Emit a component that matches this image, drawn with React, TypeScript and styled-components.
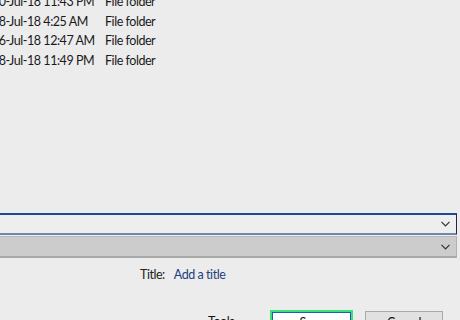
import styled, { createGlobalStyle } from "styled-components";

const GlobalStyle = createGlobalStyle`
  html, body {
    margin: 0;
    padding: 0;
    background: #ececec;
  }
  body {
    font-family: Lato, "Noto Sans", "Liberation Sans", sans-serif;
    font-size: 12.5px;
    letter-spacing: -0.45px;
    color: #1a1a1a;
  }
`;

const rows = [
  { date: "20-Jul-18 11:43 PM", type: "File folder" },
  { date: "18-Jul-18 4:25 AM", type: "File folder" },
  { date: "16-Jul-18 12:47 AM", type: "File folder" },
  { date: "18-Jul-18 11:49 PM", type: "File folder" },
];

function Chevron() {
  return (
    <svg width="9" height="6" viewBox="0 0 9 6">
      <path d="M0.5 0.8 L4.5 4.8 L8.5 0.8" fill="none" stroke="#333" strokeWidth="1.2" />
    </svg>
  );
}

function App() {
  return (
    <Window>
      <GlobalStyle />
      <FileList>
        {rows.map((r) => (
          <FileRow key={r.date}>
            <DateCell>{r.date}</DateCell>
            <TypeCell>{r.type}</TypeCell>
          </FileRow>
        ))}
      </FileList>
      <Form>
        <Combo $active>
          <Chevron />
        </Combo>
        <Combo>
          <Chevron />
        </Combo>
        <MetaRow>
          <MetaLabel>Title:</MetaLabel>
          <MetaLink>Add a title</MetaLink>
        </MetaRow>
        <Footer>
          <Tools>
            Tools <Caret>▾</Caret>
          </Tools>
          <SaveButton>Save</SaveButton>
          <Button>Cancel</Button>
        </Footer>
      </Form>
    </Window>
  );
}

const Window = styled.div`
  width: 460px;
  height: 320px;
  overflow: hidden;
  display: flex;
  flex-direction: column;
  background: #ececec;
`;

const FileList = styled.div`
  flex-shrink: 0;
  height: 221px;
  margin-top: -8px;
  display: flex;
  flex-direction: column;
`;

const FileRow = styled.div`
  height: 19.5px;
  display: flex;
  align-items: center;
  white-space: nowrap;
`;

const DateCell = styled.div`
  width: 113px;
  margin-left: -8px;
`;

const TypeCell = styled.div``;

const Form = styled.div`
  flex-shrink: 0;
  display: flex;
  flex-direction: column;
`;

const Combo = styled.div<{ $active?: boolean }>`
  box-sizing: border-box;
  flex-shrink: 0;
  width: 467px;
  margin-left: -10px;
  height: 22px;
  margin-bottom: ${(p) => (p.$active ? "1px" : "0")};
  display: flex;
  align-items: center;
  justify-content: flex-end;
  padding-right: 6px;
  background: ${(p) => (p.$active ? "#eeeeee" : "#cccccc")};
  border: 1px solid ${(p) => (p.$active ? "#1d4a94" : "#b8b8b8")};
  border-top: ${(p) => (p.$active ? "2px solid #1d4a94" : "1px solid #bcbcbc")};
  border-bottom: ${(p) => (p.$active ? "2px solid #6f86ad" : "2px solid #a8a8a8")};
  border-right-color: ${(p) => (p.$active ? "#1d2a44" : "#b0b0b0")};
`;

const MetaRow = styled.div`
  display: flex;
  align-items: center;
  gap: 9px;
  padding-left: 140px;
  height: 30px;
  margin-top: 1px;
`;

const MetaLabel = styled.span`
  color: #222;
`;

const MetaLink = styled.span`
  color: #1e3f80;
`;

const Footer = styled.div`
  display: flex;
  align-items: flex-start;
  padding-left: 208px;
  padding-top: 21px;
  white-space: nowrap;
`;

const Tools = styled.div`
  width: 62px;
  padding-top: 4px;
  color: #111;
`;

const Caret = styled.span`
  font-size: 10px;
  color: #444;
`;

const Button = styled.div`
  box-sizing: border-box;
  width: 78px;
  height: 24px;
  margin-top: 1px;
  margin-left: 12px;
  display: flex;
  justify-content: center;
  padding-top: 3px;
  background: #e1e1e1;
  border: 1px solid #a9a9a9;
  color: #111;
`;

const SaveButton = styled.div`
  box-sizing: border-box;
  width: 83px;
  height: 24px;
  display: flex;
  justify-content: center;
  padding-top: 3px;
  background: #ffffff;
  border: 2px solid #3fe07a;
  box-shadow: inset 0 0 0 1px #1a5fb4;
  color: #111;
`;

export default App;
